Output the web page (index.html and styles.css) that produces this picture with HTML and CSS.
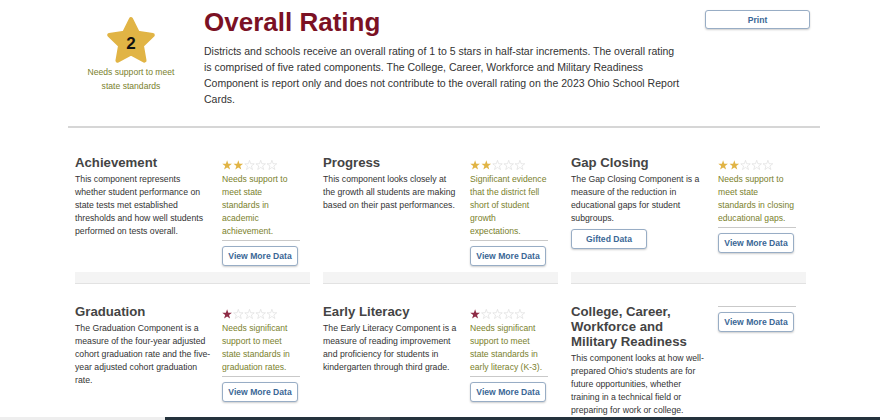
FILE: index.html
```html
<!doctype html>
<html>

<head>
	<meta charset="utf-8">
	<title>Overall Rating</title>
	<link rel="stylesheet" href="styles.css">
</head>

<body>
	<svg class="defs" width="0" height="0">
		<symbol id="star" viewBox="0 0 20 19.5">
			<polygon points="10,0.5 12.35,7.26 19.51,7.41 13.8,11.74 15.88,18.59 10,14.5 4.12,18.59 6.2,11.74 0.49,7.41 7.65,7.26" />
		</symbol>
	</svg>

	<div class="page">
		<div class="top">
			<div class="overall">
				<div class="badge">
					<svg width="52" height="50" viewBox="0 0 100 96">
						<polygon points="50,6 62.9,32.2 91.8,36.4 70.9,56.8 75.9,85.6 50,72 24.1,85.6 29.1,56.8 8.2,36.4 37.1,32.2" fill="#e1b445" stroke="#e1b445" stroke-width="8" stroke-linejoin="round" />
					</svg>
					<span>2</span>
				</div>
				<p class="verdict">Needs support to meet state standards</p>
			</div>
			<div class="intro">
				<h1>Overall Rating</h1>
				<p>Districts and schools receive an overall rating of 1 to 5 stars in half-star increments. The overall rating is comprised of five rated components. The College, Career, Workforce and Military Readiness Component is report only and does not contribute to the overall rating on the 2023 Ohio School Report Cards.</p>
			</div>
			<button class="btn print">Print</button>
		</div>

		<div class="cards">
			<div class="card">
				<div class="card-body">
					<div class="about">
						<h2>Achievement</h2>
						<p>This component represents whether student performance on state tests met established thresholds and how well students performed on tests overall.</p>
					</div>
					<div class="score">
						<svg class="stars" viewBox="0 0 108 19.5">
							<use href="#star" x="0" width="20" height="19.5" class="on" />
							<use href="#star" x="22" width="20" height="19.5" class="on" />
							<use href="#star" x="44" width="20" height="19.5" class="off" />
							<use href="#star" x="66" width="20" height="19.5" class="off" />
							<use href="#star" x="88" width="20" height="19.5" class="off" />
						</svg>
						<p class="verdict">Needs support to meet state standards in academic achievement.</p>
						<div class="actions"><button class="btn">View More Data</button></div>
					</div>
				</div>
				<div class="card-foot"></div>
			</div>

			<div class="card">
				<div class="card-body">
					<div class="about">
						<h2>Progress</h2>
						<p>This component looks closely at the growth all students are making based on their past performances.</p>
					</div>
					<div class="score">
						<svg class="stars" viewBox="0 0 108 19.5">
							<use href="#star" x="0" width="20" height="19.5" class="on" />
							<use href="#star" x="22" width="20" height="19.5" class="on" />
							<use href="#star" x="44" width="20" height="19.5" class="off" />
							<use href="#star" x="66" width="20" height="19.5" class="off" />
							<use href="#star" x="88" width="20" height="19.5" class="off" />
						</svg>
						<p class="verdict">Significant evidence that the district fell short of student growth expectations.</p>
						<div class="actions"><button class="btn">View More Data</button></div>
					</div>
				</div>
				<div class="card-foot"></div>
			</div>

			<div class="card">
				<div class="card-body">
					<div class="about">
						<h2>Gap Closing</h2>
						<p>The Gap Closing Component is a measure of the reduction in educational gaps for student subgroups.</p>
						<button class="btn gifted">Gifted Data</button>
					</div>
					<div class="score">
						<svg class="stars" viewBox="0 0 108 19.5">
							<use href="#star" x="0" width="20" height="19.5" class="on" />
							<use href="#star" x="22" width="20" height="19.5" class="on" />
							<use href="#star" x="44" width="20" height="19.5" class="off" />
							<use href="#star" x="66" width="20" height="19.5" class="off" />
							<use href="#star" x="88" width="20" height="19.5" class="off" />
						</svg>
						<p class="verdict">Needs support to meet state standards in closing educational gaps.</p>
						<div class="actions"><button class="btn">View More Data</button></div>
					</div>
				</div>
				<div class="card-foot"></div>
			</div>

			<div class="card">
				<div class="card-body">
					<div class="about">
						<h2>Graduation</h2>
						<p>The Graduation Component is a measure of the four-year adjusted cohort graduation rate and the five-year adjusted cohort graduation rate.</p>
					</div>
					<div class="score">
						<svg class="stars" viewBox="0 0 108 19.5">
							<use href="#star" x="0" width="20" height="19.5" class="low" />
							<use href="#star" x="22" width="20" height="19.5" class="off" />
							<use href="#star" x="44" width="20" height="19.5" class="off" />
							<use href="#star" x="66" width="20" height="19.5" class="off" />
							<use href="#star" x="88" width="20" height="19.5" class="off" />
						</svg>
						<p class="verdict">Needs significant support to meet state standards in graduation rates.</p>
						<div class="actions"><button class="btn">View More Data</button></div>
					</div>
				</div>
			</div>

			<div class="card">
				<div class="card-body">
					<div class="about">
						<h2>Early Literacy</h2>
						<p>The Early Literacy Component is a measure of reading improvement and proficiency for students in kindergarten through third grade.</p>
					</div>
					<div class="score">
						<svg class="stars" viewBox="0 0 108 19.5">
							<use href="#star" x="0" width="20" height="19.5" class="low" />
							<use href="#star" x="22" width="20" height="19.5" class="off" />
							<use href="#star" x="44" width="20" height="19.5" class="off" />
							<use href="#star" x="66" width="20" height="19.5" class="off" />
							<use href="#star" x="88" width="20" height="19.5" class="off" />
						</svg>
						<p class="verdict">Needs significant support to meet state standards in early literacy (K-3).</p>
						<div class="actions"><button class="btn">View More Data</button></div>
					</div>
				</div>
			</div>

			<div class="card">
				<div class="card-body">
					<div class="about">
						<h2>College, Career, Workforce and Military Readiness</h2>
						<p>This component looks at how well-prepared Ohio's students are for future opportunities, whether training in a technical field or preparing for work or college.</p>
					</div>
					<div class="score">
						<div class="actions"><button class="btn">View More Data</button></div>
					</div>
				</div>
			</div>
		</div>
	</div>

	<div class="footer">
		<div class="foot-light"></div>
		<div class="foot-dark"></div>
		<div class="foot-mid"></div>
		<div class="foot-dark grow"></div>
	</div>
</body>

</html>
```

FILE: styles.css
```css
* {
	margin: 0;
	padding: 0;
	box-sizing: border-box;
}

body {
	font-family: "Liberation Sans", Arial, sans-serif;
	color: #333;
	background: #fff;
}

.defs {
	position: absolute;
}

.page {
	width: 820px;
	padding-left: 68px;
}

/* header */
.top {
	display: flex;
	align-items: flex-start;
	padding: 7px 10px 19px 0;
	border-bottom: 2px solid #d6d6d6;
}

.overall {
	width: 126px;
	padding-top: 9px;
	text-align: center;
}

.badge {
	display: grid;
	justify-content: center;
	align-items: center;
}

.badge svg,
.badge span {
	grid-area: 1 / 1;
}

.badge svg {
	display: block;
}

.badge span {
	justify-self: center;
	padding-top: 4px;
	font-size: 17px;
	line-height: 17px;
	font-weight: bold;
	color: #111;
}

.verdict {
	font-size: 8.6px;
	line-height: 13px;
	color: #7a812c;
}

.overall .verdict {
	padding: 0 13px;
	line-height: 13.5px;
}

.intro {
	width: 480px;
	margin-left: 10px;
}

.intro h1 {
	font-size: 26px;
	line-height: 30px;
	color: #7b1124;
}

.intro p {
	margin-top: 6px;
	font-size: 10.5px;
	line-height: 16px;
}

.btn {
	display: block;
	width: 76px;
	height: 20px;
	background: #fff;
	border: 1px solid #98adc5;
	border-radius: 3px;
	box-shadow: 0 1px 2px rgba(0, 0, 0, 0.2);
	font-family: inherit;
	font-size: 8.6px;
	font-weight: bold;
	color: #3a6796;
}

.print {
	width: 105px;
	height: 19px;
	margin: 3px 0 0 auto;
}

/* components */
.cards {
	display: grid;
	grid-template-columns: repeat(3, 235px);
	column-gap: 13px;
	row-gap: 20px;
	margin: 27px 0 0 7px;
}

.card {
	display: flex;
	flex-direction: column;
}

.card-body {
	flex: 1;
	display: grid;
	grid-template-columns: 137px 78px;
	column-gap: 10px;
	align-items: start;
}

.about h2 {
	margin-bottom: 3px;
	font-size: 13.2px;
	line-height: 15px;
	color: #444;
}

.about p {
	font-size: 8.7px;
	line-height: 13px;
}

.gifted {
	margin-top: 4px;
}

.stars {
	display: block;
	width: 55px;
	height: 10px;
	margin-top: 5px;
}

.stars .on {
	fill: #e1b445;
}

.stars .low {
	fill: #8e2c46;
}

.stars .off {
	fill: #fff;
	stroke: #dadada;
	stroke-width: 1.2;
}

.score .verdict {
	margin-top: 3px;
}

.actions {
	margin-top: 2px;
	padding-top: 5px;
	border-top: 1px solid #c9c9c9;
}

.card-foot {
	height: 12px;
	margin-top: 6px;
	background: #f4f4f4;
	border-bottom: 1px solid #e2e2e2;
}

/* footer strip */
.footer {
	display: flex;
	height: 40px;
}

.foot-light {
	width: 165px;
	background: #eeeeee;
}

.foot-dark {
	width: 195px;
	background: #25333d;
}

.foot-mid {
	width: 30px;
	background: #3a4650;
}

.grow {
	flex: 1;
}
```
